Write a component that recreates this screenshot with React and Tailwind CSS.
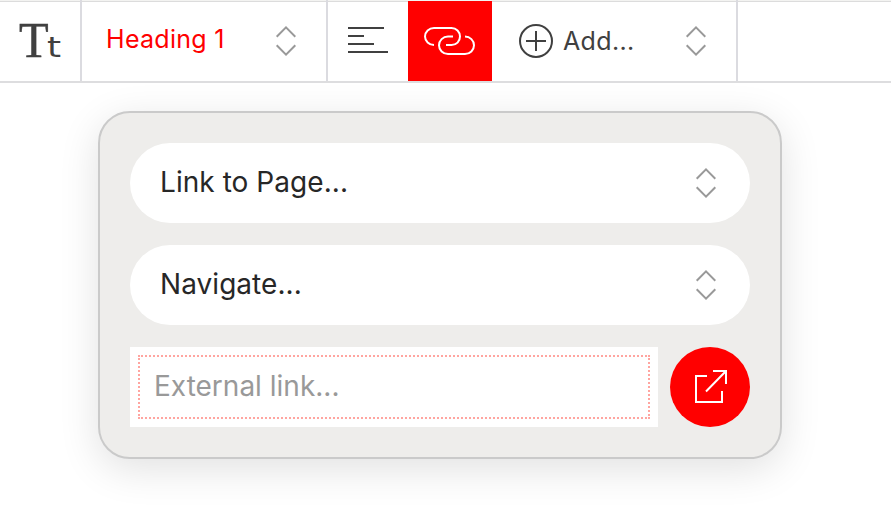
function Chevrons() {
  return (
    <svg className="mb-[2px] h-8 w-6 shrink-0" viewBox="0 0 24 32" fill="none" stroke="#999999" strokeWidth="2">
      <path d="M2.7 12.7 12 3.4l9.3 9.3M2.7 21.3 12 30.6l9.3-9.3" />
    </svg>
  );
}

function AlignIcon() {
  return (
    <svg className="h-[26px] w-10" viewBox="0 0 40 26" fill="#404040">
      <path d="M0 0h36v2H0zM0 8h16v2H0zM0 16h26v2H0zM0 24h40v2H0z" />
    </svg>
  );
}

function LinkIcon() {
  return (
    <svg className="mr-px h-7 w-[51px]" viewBox="0 0 51 28" fill="none" stroke="#ffffff" strokeWidth="2">
      <path d="M10 18.1C5 18 1 14.2 1 9.6C1 4.7 5 1 10 1H27.500C32.300 1 36 4.700 36 9.600C36 14.400 32.300 18.100 27.500 18.100H22" />
      <path d="M29 9.600H24C19 9.600 15 13.400 15 18.300C15 23.200 19 27 24 27H41C46 27 50 23.200 50 18.300C50 13.400 46 9.600 41 9.600" />
    </svg>
  );
}

function PlusCircle() {
  return (
    <svg className="h-[34px] w-[34px]" viewBox="0 0 34 34" fill="none" stroke="#404040" strokeWidth="2">
      <circle cx="17" cy="17" r="16" />
      <path d="M7 17h20M17 7v20" />
    </svg>
  );
}

function ExternalIcon() {
  return (
    <svg className="ml-[2px] h-[34px] w-[34px]" viewBox="0 0 34 34" fill="none" stroke="#ffffff" strokeWidth="2">
      <path d="M13 6H2v26h26V21M19 1h13v13M32 1 12 21.5" />
    </svg>
  );
}

function SelectPill({ children }) {
  return (
    <button className="flex h-20 w-full items-center justify-between rounded-full bg-white pl-[30px] pr-8 text-left text-[28px] text-[#272727]">
      <span className="mb-[2px] tracking-[0.05px]">{children}</span>
      <Chevrons />
    </button>
  );
}

export default function App() {
  return (
    <main className="h-[528px] w-[891px] overflow-hidden bg-white font-['Inter',sans-serif]">
      <header className="flex h-[83px] border-b-2 border-[#dddddf] bg-white shadow-[inset_0_1px_0_#f3f3f1,inset_0_2px_0_#dcdcdc]">
        <div className="flex w-[82px] items-baseline border-r-2 border-[#dbdbe0] pl-[19px] leading-[80px] text-[#404040]">
          <span className="inline-block w-[28px] origin-left scale-x-[0.97] font-['Liberation_Serif',serif] text-[50px] tracking-[-3px] [-webkit-text-stroke:0.5px_#404040]">T</span>
          <span className="inline-block origin-left scale-x-[1.28] font-['DejaVu_Sans',sans-serif] text-[28px]">t</span>
        </div>
        <div className="flex w-[246px] items-center justify-between border-r-2 border-[#dbdbe0] pl-6 pr-7">
          <span className="pb-[3px] text-[25px] leading-8 tracking-[0.3px] text-[#ff0000]">Heading 1</span>
          <Chevrons />
        </div>
        <div className="flex w-20 items-center justify-center pb-px">
          <AlignIcon />
        </div>
        <div className="mt-px flex h-20 w-[84px] items-center justify-center bg-[#ff0000]">
          <LinkIcon />
        </div>
        <div className="flex w-[246px] items-center border-r-2 border-[#dbdbe0] pl-[27px] pr-7">
          <PlusCircle />
          <span className="ml-[10px] text-[25px] leading-8 tracking-[0.35px] text-[#404040]">Add...</span>
          <span className="ml-auto flex"><Chevrons /></span>
        </div>
      </header>
      <section className="ml-[98px] mt-7 flex h-[348px] w-[684px] flex-col gap-[22px] rounded-[32px] border-2 border-[#cacaca] bg-[#eeedeb] p-[30px] shadow-[0_10px_40px_rgba(0,0,0,0.12)]">
        <SelectPill>Link to Page...</SelectPill>
        <SelectPill>Navigate...</SelectPill>
        <div className="flex gap-3">
          <div className="h-20 w-[528px] bg-white p-2">
            <div className="flex h-16 items-center border-2 border-dotted border-[#ffa5a0] pl-[14px] text-[28px] text-[#999999]">
              <span className="mb-[2px]">External link...</span>
            </div>
          </div>
          <button className="flex h-20 w-20 items-center justify-center rounded-full bg-[#ff0000]">
            <ExternalIcon />
          </button>
        </div>
      </section>
    </main>
  );
}
